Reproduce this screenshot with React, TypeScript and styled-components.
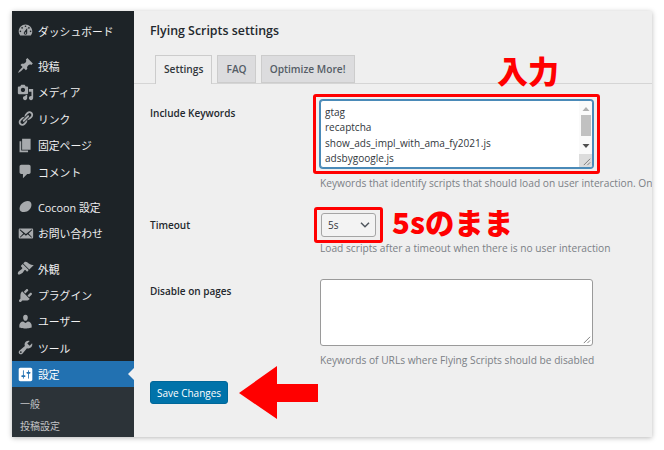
import React from "react";
import styled, { createGlobalStyle } from "styled-components";

const GlobalStyle = createGlobalStyle`
  html, body {
    margin: 0;
    padding: 0;
    background: #fff;
  }
  body {
    width: 664px;
    height: 450px;
    overflow: hidden;
    font-family: "Open Sans", "Noto Sans CJK JP", sans-serif;
  }
`;

const ICONS: Record<string, string> = {
  dashboard:
    "M3.76 16h12.48c1.1-1.37 1.76-3.11 1.76-5 0-4.42-3.58-8-8-8s-8 3.58-8 8c0 1.89.66 3.63 1.76 5zM10 4c.55 0 1 .45 1 1s-.45 1-1 1-1-.45-1-1 .45-1 1-1zM6 6c.55 0 1 .45 1 1s-.45 1-1 1-1-.45-1-1 .45-1 1-1zm8 0c.55 0 1 .45 1 1s-.45 1-1 1-1-.45-1-1 .45-1 1-1zm-5.37 5.55L12 7v6c0 1.1-.9 2-2 2s-2-.9-2-2c0-.57.24-1.08.63-1.45zM4 10c.55 0 1 .45 1 1s-.45 1-1 1-1-.45-1-1 .45-1 1-1zm12 0c.55 0 1 .45 1 1s-.45 1-1 1-1-.45-1-1 .45-1 1-1zm-5 3c0-.55-.45-1-1-1s-1 .45-1 1 .45 1 1 1 1-.45 1-1z",
  pin: "M10.44 3.02l1.82-1.82 6.36 6.35-1.83 1.82c-1.05-.68-2.48-.57-3.41.36l-.75.75c-.92.93-1.04 2.35-.35 3.41l-1.83 1.82-2.41-2.41-2.8 2.79c-.42.42-3.38 2.71-3.8 2.29s1.86-3.39 2.28-3.81l2.79-2.79L4.1 9.36l1.83-1.82c1.05.69 2.48.57 3.4-.36l.75-.75c.93-.92 1.05-2.35.36-3.41z",
  media:
    "M13 11V4c0-.55-.45-1-1-1h-1.67L9 1H5L3.67 3H2c-.55 0-1 .45-1 1v7c0 .55.45 1 1 1h10c.55 0 1-.45 1-1zM7 4.5c1.38 0 2.5 1.12 2.5 2.5S8.38 9.5 7 9.5 4.5 8.38 4.5 7 5.62 4.5 7 4.5zM14 6h5v10.5c0 1.38-1.12 2.5-2.5 2.5S14 17.88 14 16.5s1.12-2.5 2.5-2.5c.17 0 .34.02.5.05V9h-3V6zm-4 8.05V13h2v3.5c0 1.38-1.12 2.5-2.5 2.5S7 17.88 7 16.5 8.12 14 9.5 14c.17 0 .34.02.5.05z",
  links:
    "M17.74 2.76c1.68 1.69 1.68 4.41 0 6.1l-1.53 1.52c-1.12 1.12-2.7 1.47-4.14 1.09l2.62-2.61.76-.77.76-.76c.84-.84.84-2.2 0-3.04-.84-.85-2.2-.85-3.04 0l-.77.76-3.38 3.38c-.37-1.44-.02-3.02 1.1-4.14l1.52-1.53c1.69-1.68 4.42-1.68 6.1 0zM8.59 13.43l5.34-5.34c.42-.42.42-1.1 0-1.52-.44-.43-1.13-.39-1.53 0l-5.33 5.34c-.42.42-.42 1.1 0 1.52.44.43 1.13.39 1.52 0zm-.76 2.29l4.14-4.15c.38 1.44.03 3.02-1.09 4.14l-1.52 1.53c-1.69 1.68-4.41 1.68-6.1 0-1.68-1.68-1.68-4.42 0-6.1l1.53-1.52c1.12-1.12 2.7-1.47 4.14-1.1l-4.14 4.15c-.85.84-.85 2.2 0 3.05.84.84 2.2.84 3.04 0z",
  page: "M6 15V2h10v13H6zm-1 1h8v2H3V5h2v11z",
  comments: "M5 2h9c1.1 0 2 .9 2 2v7c0 1.1-.9 2-2 2h-2l-5 5v-5H5c-1.1 0-2-.9-2-2V4c0-1.1.9-2 2-2z",
  email:
    "M19 14.5v-9c0-.83-.67-1.5-1.5-1.5H3.49c-.83 0-1.5.67-1.5 1.5v9c0 .83.67 1.5 1.5 1.5H17.5c.83 0 1.5-.67 1.5-1.5zm-1.31-9.11c.33.33.15.67-.03.84L13.6 9.95l3.9 4.06c.12.14.2.36.06.51-.13.16-.43.15-.56.05l-4.37-3.73-2.14 1.95-2.13-1.95-4.37 3.73c-.13.1-.43.11-.56-.05-.14-.15-.06-.37.06-.51l3.9-4.06-4.06-3.72c-.18-.17-.36-.51-.03-.84s.67-.17.95.07l6.24 5.04 6.25-5.04c.28-.24.62-.4.95-.07z",
  brush:
    "M14.48 11.06L7.41 3.99l1.5-1.5c.5-.56 2.3-.47 3.51.32 1.21.8 1.43 1.28 2.91 2.1 1.18.64 2.45 1.26 4.45.85zm-.71.71L6.7 4.7 4.93 6.47c-.39.39-.39 1.02 0 1.41l1.06 1.06c.39.39.39 1.03 0 1.42-.6.6-1.43 1.11-2.21 1.69-.35.26-.7.53-1.01.84C1.43 13.23.4 16.08 1.22 16.9c.82.82 3.67-.21 5.01-1.55.31-.31.58-.66.84-1.01.58-.78 1.09-1.61 1.69-2.21.39-.39 1.03-.39 1.42 0l1.06 1.06c.39.39 1.02.39 1.41 0z",
  plugins:
    "M13.11 4.36L9.87 7.6 8 5.73l3.24-3.24c.35-.34 1.05-.2 1.56.32.52.51.66 1.21.31 1.55zm-8 1.77l.91-1.12 9.01 9.01-1.19.84c-.71.71-2.63 1.16-3.82 1.16H6.14L4.9 17.26c-.59.59-1.54.59-2.12 0-.59-.58-.59-1.53 0-2.12l1.24-1.24v-3.88c0-1.13.4-3.19 1.09-3.89zm7.26 3.97l3.24-3.24c.34-.35 1.04-.21 1.55.31.52.51.66 1.21.31 1.55l-3.24 3.25z",
  users:
    "M10 9.25c-2.27 0-2.73-3.44-2.73-3.44C7 4.02 7.82 2 9.97 2c2.16 0 2.98 2.02 2.71 3.81 0 0-.41 3.44-2.68 3.44zm0 2.57L12.72 10c2.39 0 4.52 2.33 4.52 4.53v2.49s-3.65 1.13-7.24 1.13c-3.65 0-7.24-1.13-7.24-1.13v-2.49c0-2.25 1.94-4.48 4.47-4.48z",
  tools:
    "M16.68 9.77c-1.34 1.34-3.3 1.67-4.95.99l-5.41 6.52c-.99.99-2.59.99-3.58 0s-.99-2.59 0-3.57l6.52-5.42c-.68-1.65-.35-3.61.99-4.95 1.28-1.28 3.12-1.62 4.72-1.06l-2.89 2.89 2.82 2.82 2.86-2.87c.53 1.58.18 3.39-1.08 4.65zM3.81 16.21c.4.39 1.04.39 1.43 0 .4-.4.4-1.04 0-1.43-.39-.4-1.03-.4-1.43 0-.39.39-.39 1.03 0 1.43z",
  settings:
    "M18 16V4c0-1.1-.9-2-2-2H4c-1.1 0-2 .9-2 2v12c0 1.1.9 2 2 2h12c1.1 0 2-.9 2-2zM8 11h1c.55 0 1 .45 1 1s-.45 1-1 1H8v1.5c0 .28-.22.5-.5.5s-.5-.22-.5-.5V13H6c-.55 0-1-.45-1-1s.45-1 1-1h1V5.5c0-.28.22-.5.5-.5s.5.22.5.5V11zm5-2h-1c-.55 0-1-.45-1-1s.45-1 1-1h1V5.5c0-.28.22-.5.5-.5s.5.22.5.5V7h1c.55 0 1 .45 1 1s-.45 1-1 1h-1v5.5c0 .28-.22.5-.5.5s-.5-.22-.5-.5V9z",
  cocoon: "M3 12.5C3 8 7.5 3.5 12.5 3.5c3 0 4.5 1.5 4.5 4.5 0 4.5-4 8.5-8.5 8.5-3.5 0-5.5-1.5-5.5-4z",
};

const MENU = [
  [
    ["dashboard", "ダッシュボード"],
  ],
  [
    ["pin", "投稿"],
    ["media", "メディア"],
    ["links", "リンク"],
    ["page", "固定ページ"],
    ["comments", "コメント"],
  ],
  [
    ["cocoon", "Cocoon 設定"],
    ["email", "お問い合わせ"],
  ],
  [
    ["brush", "外観"],
    ["plugins", "プラグイン"],
    ["users", "ユーザー"],
    ["tools", "ツール"],
    ["settings", "設定"],
  ],
];

const App = () => {
  return (
    <>
      <GlobalStyle />
      <Page>
        <Window>
          <Sidebar>
            {MENU.map((group, i) => (
              <MenuGroup key={i}>
                {group.map(([icon, label]) => (
                  <MenuItem key={label} $active={icon === "settings"}>
                    <MenuIcon viewBox="0 0 20 20" $active={icon === "settings"}>
                      <path d={ICONS[icon]} />
                    </MenuIcon>
                    {label}
                  </MenuItem>
                ))}
              </MenuGroup>
            ))}
            <SubMenu>
              <SubItem>一般</SubItem>
              <SubItem>投稿設定</SubItem>
            </SubMenu>
          </Sidebar>
          <Main>
            <Title>Flying Scripts settings</Title>
            <Tabs>
              <Tab $active>Settings</Tab>
              <Tab>FAQ</Tab>
              <Tab>Optimize More!</Tab>
            </Tabs>
            <KeywordsRow>
              <FieldLabel>Include Keywords</FieldLabel>
              <div>
                <Marked>
                  <FocusedArea>
                    <AreaText>
                      <div>gtag</div>
                      <div>recaptcha</div>
                      <div>show_ads_impl_with_ama_fy2021.js</div>
                      <div>adsbygoogle.js</div>
                    </AreaText>
                    <Scrollbar>
                      <ScrollArrow viewBox="0 0 10 6">
                        <path d="M1.5 5L5 1l3.5 4z" fill="#b0b0b0" />
                      </ScrollArrow>
                      <ScrollThumb />
                      <ScrollArrow viewBox="0 0 10 6">
                        <path d="M1.5 1L5 5l3.5-4z" fill="#505050" />
                      </ScrollArrow>
                      <ScrollFoot />
                      <ScrollCorner viewBox="0 0 10 10">
                        <path d="M9 2L2 9M9 6L6 9" stroke="#777" strokeWidth="1" />
                      </ScrollCorner>
                    </Scrollbar>
                  </FocusedArea>
                </Marked>
                <Hint $top={8}>Keywords that identify scripts that should load on user interaction. Only</Hint>
              </div>
            </KeywordsRow>
            <TimeoutRow>
              <FieldLabel>Timeout</FieldLabel>
              <div>
                <Marked $fit>
                  <SelectBox>
                    5s
                    <svg width="10" height="6" viewBox="0 0 10 6">
                      <path d="M1 .8l4 4 4-4" fill="none" stroke="#50575e" strokeWidth="1.5" />
                    </svg>
                  </SelectBox>
                </Marked>
                <Hint $top={4}>Load scripts after a timeout when there is no user interaction</Hint>
              </div>
            </TimeoutRow>
            <DisableRow>
              <FieldLabel>Disable on pages</FieldLabel>
              <div>
                <PlainArea>
                  <ScrollCorner viewBox="0 0 10 10">
                    <path d="M9 2L2 9M9 6L6 9" stroke="#777" strokeWidth="1" />
                  </ScrollCorner>
                </PlainArea>
                <Hint $top={7}>Keywords of URLs where Flying Scripts should be disabled</Hint>
              </div>
            </DisableRow>
            <SaveButton>Save Changes</SaveButton>
            <InputNote>入力</InputNote>
            <KeepNote>5sのまま</KeepNote>
            <Arrow viewBox="0 0 79 53">
              <path d="M0 27L38 0v18h41v18H38v17z" fill="#ff0000" />
            </Arrow>
          </Main>
        </Window>
      </Page>
    </>
  );
};

const Page = styled.div`
  box-sizing: border-box;
  width: 664px;
  height: 450px;
  padding: 11px 12px 13px;
`;

const Window = styled.div`
  display: flex;
  height: 426px;
  overflow: hidden;
  box-shadow: 0 1px 5px rgba(0, 0, 0, 0.28);
`;

const Sidebar = styled.nav`
  flex: 0 0 122px;
  box-sizing: border-box;
  padding-top: 6.4px;
  background: #1d2327;
  overflow: hidden;
`;

const MenuGroup = styled.div`
  margin-bottom: 9px;
  &:nth-last-child(2) {
    margin-bottom: 0;
  }
`;

const MenuItem = styled.div<{ $active?: boolean }>`
  position: relative;
  display: flex;
  align-items: center;
  gap: 4px;
  height: 26.4px;
  padding-left: 5px;
  font-size: 10.8px;
  color: ${(p) => (p.$active ? "#fff" : "#f0f0f1")};
  background: ${(p) => (p.$active ? "#2271b1" : "transparent")};
  white-space: nowrap;
  ${(p) =>
    p.$active &&
    `
    &::after {
      content: "";
      position: absolute;
      right: 0;
      top: 7px;
      border: 6px solid transparent;
      border-right-color: #f0f0f1;
      border-left-width: 0;
    }
  `}
`;

const MenuIcon = styled.svg<{ $active?: boolean }>`
  flex: 0 0 17px;
  width: 17px;
  height: 17px;
  fill: ${(p) => (p.$active ? "#fff" : "#a7aaad")};
`;

const SubMenu = styled.div`
  padding: 6px 0 0 8px;
  height: 60px;
  background: #2c3338;
`;

const SubItem = styled.div`
  height: 22px;
  line-height: 22px;
  font-size: 10px;
  color: #c3c4c7;
`;

const Main = styled.main`
  position: relative;
  flex: 1;
  min-width: 0;
  box-sizing: border-box;
  padding: 10px 0 0 16px;
  background: #efefef;
  color: #23282d;
  overflow: hidden;
`;

const Title = styled.h1`
  margin: 0;
  height: 19px;
  line-height: 19px;
  font-size: 12.4px;
  font-weight: 600;
`;

const Tabs = styled.div`
  display: flex;
  gap: 5px;
  height: 28px;
  margin: 15px 0 0 -16px;
  padding-left: 21px;
  border-bottom: 1px solid #d5d5d5;
`;

const Tab = styled.div<{ $active?: boolean }>`
  box-sizing: border-box;
  height: ${(p) => (p.$active ? "29px" : "28px")};
  padding: 0 8px;
  line-height: 27px;
  font-size: 10.2px;
  font-weight: 600;
  color: ${(p) => (p.$active ? "#32373c" : "#555d66")};
  background: ${(p) => (p.$active ? "#efefef" : "#dcdcde")};
  border: 1px solid #ccc;
  border-bottom: ${(p) => (p.$active ? "none" : "1px solid #ccc")};
`;

const FormRow = styled.div`
  display: grid;
  grid-template-columns: 170px 1fr;
`;

const FieldLabel = styled.div`
  padding-top: 5px;
  line-height: 15px;
  font-size: 10px;
  font-weight: 600;
  color: #23282d;
`;

const KeywordsRow = styled(FormRow)`
  margin-top: 16px;
  ${FieldLabel} {
    padding-top: 6px;
  }
`;

const TimeoutRow = styled(FormRow)`
  margin-top: 22px;
`;

const DisableRow = styled(FormRow)`
  margin-top: 23px;
`;

/* the red frame drawn over a field */
const Marked = styled.div<{ $fit?: boolean }>`
  position: relative;
  width: ${(p) => (p.$fit ? "55px" : "273px")};
  margin-left: ${(p) => (p.$fit ? "1px" : "0")};
  &::after {
    content: "";
    position: absolute;
    inset: -6px -7px -6px -7px;
    border: 3px solid #ff0000;
    border-radius: 3px;
    pointer-events: none;
  }
`;

const FocusedArea = styled.div`
  display: flex;
  box-sizing: border-box;
  height: 68px;
  background: #fff;
  border: 1px solid #4a8ab8;
  border-radius: 3px;
  box-shadow: 0 0 0 1px #4a8ab8;
  overflow: hidden;
`;

const AreaText = styled.div`
  flex: 1;
  padding: 4px 0 0 4px;
  font-size: 10.05px;
  line-height: 15.3px;
  color: #32373c;
`;

const Scrollbar = styled.div`
  position: relative;
  display: flex;
  flex-direction: column;
  align-items: center;
  flex: 0 0 13px;
  padding-top: 5px;
  background: #fafafa;
`;

const ScrollArrow = styled.svg`
  width: 10px;
  height: 6px;
`;

const ScrollThumb = styled.div`
  width: 10px;
  height: 21px;
  margin: 3px 0 7px;
  background: #c1c1c1;
`;

const ScrollFoot = styled.div`
  position: absolute;
  left: 0;
  right: 0;
  bottom: 0;
  height: 13px;
  background: #dcdcdc;
`;

const ScrollCorner = styled.svg`
  position: absolute;
  right: 1px;
  bottom: 1px;
  width: 9px;
  height: 9px;
`;

const Hint = styled.div<{ $top: number }>`
  margin-top: ${(p) => p.$top}px;
  height: 15px;
  line-height: 15px;
  font-size: 10.2px;
  color: #7b8086;
  white-space: nowrap;
`;

const SelectBox = styled.div`
  display: flex;
  align-items: center;
  justify-content: space-between;
  box-sizing: border-box;
  height: 24px;
  padding: 0 5px 0 6px;
  font-size: 10px;
  color: #32373c;
  background: #f3f3f3;
  border: 1px solid #a5a5a5;
  border-radius: 3px;
`;

const PlainArea = styled.div`
  position: relative;
  box-sizing: border-box;
  width: 273px;
  height: 67px;
  background: #fff;
  border: 1px solid #9a9a9a;
  border-radius: 3px;
`;

const SaveButton = styled.button`
  display: block;
  width: 78px;
  height: 23px;
  margin-top: 13px;
  padding: 0;
  font-family: inherit;
  font-size: 10px;
  font-weight: 400;
  color: #fff;
  background: #0073aa;
  border: 1px solid #006799;
  border-radius: 3px;
`;

const Note = styled.div`
  position: absolute;
  font-family: "Noto Sans CJK JP", sans-serif;
  font-weight: 900;
  color: #ff0000;
  white-space: nowrap;
  line-height: 1;
`;

const InputNote = styled(Note)`
  left: 363px;
  top: 43px;
  font-size: 31px;
`;

const KeepNote = styled(Note)`
  left: 258px;
  top: 196px;
  font-size: 29.4px;
`;

const Arrow = styled.svg`
  position: absolute;
  left: 105px;
  top: 355px;
  width: 79px;
  height: 53px;
`;

export default App;
